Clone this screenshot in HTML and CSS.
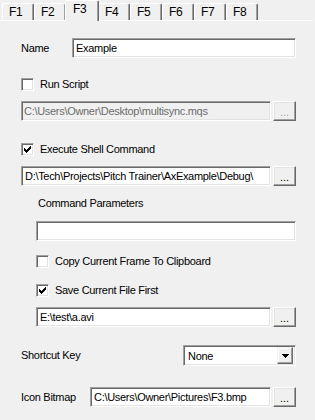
FILE: index.html
```html
<!DOCTYPE html>
<html>
<head>
<meta charset="utf-8">
<link rel="stylesheet" href="styles.css">
</head>
<body>
<div class="tabstrip">
  <div class="tab">F1</div>
  <div class="tab">F2</div>
  <div class="tab selected">F3</div>
  <div class="tab">F4</div>
  <div class="tab">F5</div>
  <div class="tab">F6</div>
  <div class="tab">F7</div>
  <div class="tab">F8</div>
</div>
<div class="panel">
  <div class="row r-name">
    <span class="lbl lbl-name">Name</span>
    <div class="textbox tb-name">Example</div>
  </div>
  <div class="check r-run">
    <span class="cb"></span><span class="cb-text">Run Script</span>
  </div>
  <div class="row r-script">
    <div class="textbox disabled tb-path">C:\Users\Owner\Desktop\multisync.mqs</div>
    <div class="btn disabled">...</div>
  </div>
  <div class="check r-exec">
    <span class="cb"><svg class="tick" width="7" height="7" viewBox="0 0 7 7" shape-rendering="crispEdges"><path d="M7 0V3H6V4H5V5H4V6H3V7H2V6H1V5H0V2H1V3H2V4H3V3H4V2H5V1H6V0Z"/></svg></span><span class="cb-text">Execute Shell Command</span>
  </div>
  <div class="row r-cmd">
    <div class="textbox tb-path">D:\Tech\Projects\Pitch Trainer\AxExample\Debug\</div>
    <div class="btn">...</div>
  </div>
  <div class="sub">
    <div class="lbl r-params">Command Parameters</div>
    <div class="row r-paramsbox">
      <div class="textbox tb-params"></div>
    </div>
    <div class="check r-copy">
      <span class="cb"></span><span class="cb-text">Copy Current Frame To Clipboard</span>
    </div>
    <div class="check r-save">
      <span class="cb"><svg class="tick" width="7" height="7" viewBox="0 0 7 7" shape-rendering="crispEdges"><path d="M7 0V3H6V4H5V5H4V6H3V7H2V6H1V5H0V2H1V3H2V4H3V3H4V2H5V1H6V0Z"/></svg></span><span class="cb-text">Save Current File First</span>
    </div>
    <div class="row r-file">
      <div class="textbox tb-file">E:\test\a.avi</div>
      <div class="btn">...</div>
    </div>
  </div>
  <div class="row r-shortcut">
    <span class="lbl lbl-shortcut">Shortcut Key</span>
    <div class="combo">
      <span class="combo-text">None</span>
      <span class="combo-btn"><svg width="7" height="4" viewBox="0 0 7 4" shape-rendering="crispEdges"><path d="M0 0H7V1H6V2H5V3H4V4H3V3H2V2H1V1H0Z"/></svg></span>
    </div>
  </div>
  <div class="row r-icon">
    <span class="lbl lbl-icon">Icon Bitmap</span>
    <div class="textbox tb-icon">C:\Users\Owner\Pictures\F3.bmp</div>
    <div class="btn">...</div>
  </div>
</div>
</body>
</html>
```

FILE: styles.css
```css
* { box-sizing: border-box; }

body {
  margin: 0;
  width: 315px;
  height: 420px;
  overflow: hidden;
  background: #f0f0f0;
  font: 11px "Liberation Sans", Arial, sans-serif;
  letter-spacing: -0.3px;
  color: #000;
}

/* tabs */
.tabstrip {
  display: flex;
  align-items: flex-end;
  width: 313px;
  height: 21px;
  padding-left: 2px;
  border-bottom: 1px solid #fff;
}
.tab {
  width: 32px;
  height: 17px;
  padding: 2px 0 0 6px;
  border: 1px solid #fff;
  border-right-color: #696969;
  border-bottom: 0;
  border-radius: 2px 2px 0 0;
  box-shadow: inset -1px 0 #a0a0a0;
  background: #f0f0f0;
  line-height: 13px;
  font-size: 12px;
}
.tab.selected {
  position: relative;
  z-index: 1;
  width: 34px;
  height: 21px;
  margin: 0 -1px -1px;
  padding: 2px 0 0 7px;
}

/* panel */
.panel {
  padding-left: 21px;
}
.row {
  display: flex;
  align-items: center;
}
.lbl {
  line-height: 13px;
  white-space: nowrap;
}
.check {
  display: flex;
  align-items: center;
  height: 13px;
  white-space: nowrap;
}
.cb {
  width: 13px;
  height: 13px;
  flex: none;
  display: flex;
  align-items: center;
  justify-content: center;
  background: #fff;
  border: 1px solid;
  border-color: #a0a0a0 #fff #fff #a0a0a0;
  box-shadow: inset 1px 1px #696969, inset -1px -1px #e3e3e3;
}
.tick { display: block; fill: #000; }
.cb-text { margin-left: 6px; line-height: 13px; }

.textbox {
  height: 20px;
  display: flex;
  align-items: center;
  padding: 0 3px;
  background: #fff;
  border: 1px solid;
  border-color: #a0a0a0 #fff #fff #a0a0a0;
  box-shadow: inset 1px 1px #696969, inset -1px -1px #e3e3e3;
  white-space: nowrap;
  overflow: hidden;
}
.textbox.disabled {
  background: #f0f0f0;
  color: #6d6d6d;
  padding-left: 2px;
}

.btn {
  width: 23px;
  height: 20px;
  margin-left: 2px;
  flex: none;
  display: flex;
  align-items: center;
  justify-content: center;
  padding-top: 2px;
  border: 1px solid;
  border-color: #fff #696969 #696969 #fff;
  box-shadow: inset -1px -1px #a0a0a0, inset 1px 1px #e3e3e3;
  background: #f0f0f0;
  color: #000;
  letter-spacing: 0;
}
.btn.disabled { color: #a0a0a0; }

.combo {
  width: 113px;
  height: 21px;
  display: flex;
  align-items: center;
  justify-content: space-between;
  padding: 2px 2px 2px 4px;
  background: #fff;
  border: 1px solid;
  border-color: #a0a0a0 #fff #fff #a0a0a0;
  box-shadow: inset 1px 1px #696969, inset -1px -1px #e3e3e3;
}
.combo-btn {
  width: 16px;
  height: 17px;
  display: flex;
  align-items: center;
  justify-content: center;
  background: #f0f0f0;
  border: 1px solid;
  border-color: #f0f0f0 #696969 #696969 #f0f0f0;
  box-shadow: inset -1px -1px #a0a0a0, inset 1px 1px #fff;
}
.combo-btn svg { display: block; fill: #000; }

/* sizes and vertical rhythm */
.r-name { margin-top: 17px; }
.lbl-name { width: 51px; }
.tb-name { width: 224px; }

.r-run { margin-top: 20px; }
.r-script { margin-top: 10px; }
.tb-path { width: 250px; }

.r-exec { margin-top: 22px; }
.r-cmd { margin-top: 10px; }

.sub { padding-left: 15px; }
.r-params { margin-top: 11px; padding-left: 2px; }
.r-paramsbox { margin-top: 11px; }
.tb-params { width: 260px; }
.r-copy { margin-top: 14px; }
.r-save { margin-top: 16px; }
.r-file { margin-top: 10px; }
.tb-file { width: 235px; }

.r-shortcut { margin-top: 18px; }
.lbl-shortcut { width: 162px; }

.r-icon { margin-top: 21px; }
.lbl-icon { width: 69px; }
.tb-icon { width: 181px; }
```
